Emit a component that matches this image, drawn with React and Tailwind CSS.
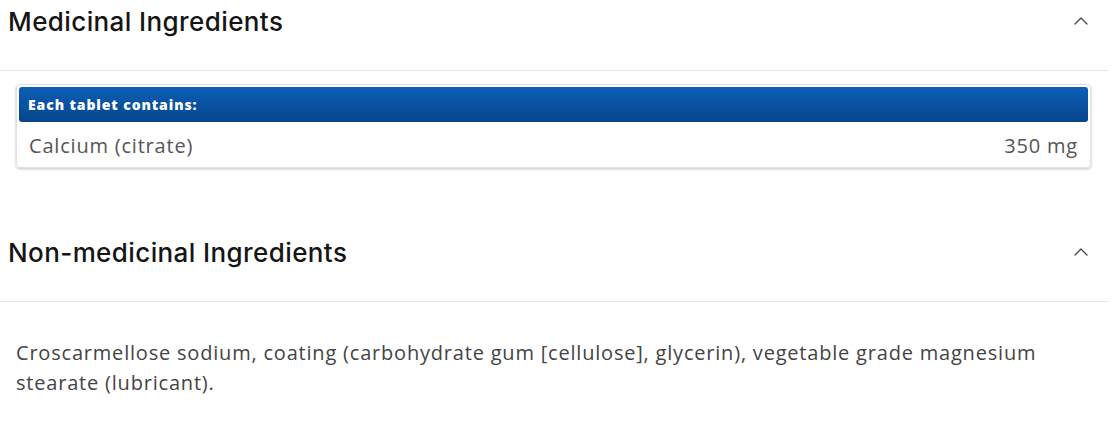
import { ChevronUp } from "lucide-react";

function SectionHeader({ title }) {
  return (
    <div className="flex items-start justify-between h-[71px] border-b border-[#e6e6e6] pl-2 pr-[15px] pt-[7px]">
      <h2
        className="text-[26px] leading-[30px] font-medium tracking-[0.4px] text-[#151515]"
        style={{ fontFamily: "Inter, 'Open Sans', sans-serif" }}
      >
        {title}
      </h2>
      <ChevronUp className="w-6 h-6 mt-[2px] text-[#444]" strokeWidth={1.25} />
    </div>
  );
}

export default function App() {
  return (
    <div
      className="w-[1108px] bg-white"
      style={{ fontFamily: "'Open Sans', 'Noto Sans', sans-serif" }}
    >
      <SectionHeader title="Medicinal Ingredients" />

      <div className="pt-[13px] pl-4 pr-[17px]">
        <div className="rounded-[4px] border border-[#e2e2e2] shadow-[0_1px_3px_rgba(0,0,0,0.25)] p-[2px]">
          <div className="h-[35px] flex items-center px-[9px] rounded-[3px] bg-gradient-to-b from-[#0b5fb6] to-[#07458c]">
            <span className="text-white text-[14px] font-extrabold tracking-[0.9px]">
              Each tablet contains:
            </span>
          </div>
          <div className="h-[43px] flex items-center justify-between px-[10px] pt-[4px] text-[20px] tracking-[0.8px] text-[#555]">
            <span>Calcium (citrate)</span>
            <span>350 mg</span>
          </div>
        </div>
      </div>

      <div className="mt-[63px]">
        <SectionHeader title="Non-medicinal Ingredients" />
      </div>

      <div className="px-4 pt-[36px] pb-10 text-[20px] leading-[30px] tracking-[0.8px] text-[#444]">
        Croscarmellose sodium, coating (carbohydrate gum [cellulose], glycerin),
        vegetable grade magnesium stearate (lubricant).
      </div>
    </div>
  );
}
